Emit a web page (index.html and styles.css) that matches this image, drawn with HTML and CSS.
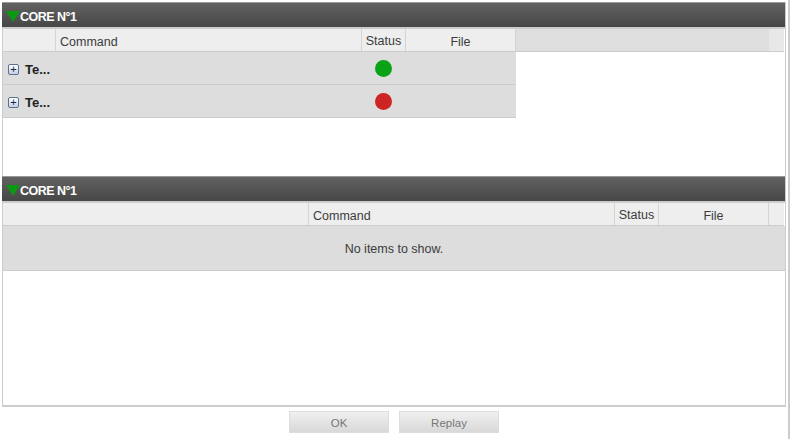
FILE: index.html
```html
<!DOCTYPE html>
<html lang="en">
<head>
    <meta charset="UTF-8">
    <title>Core commands</title>
    <link rel="stylesheet" href="styles.css">
</head>
<body>
    <div class="window">
        <div class="panels">
            <!-- First core -->
            <section class="panel panel-top">
                <div class="panel-title">
                    <svg class="arrow" width="14" height="11" viewBox="0 0 14 11"><polygon points="0,0 14,0 7,11" fill="#0a9a12"/></svg>
                    <span>CORE N°1</span>
                </div>
                <div class="grid-head">
                    <div class="cell col-expand"></div>
                    <div class="cell col-command">Command</div>
                    <div class="cell col-status">Status</div>
                    <div class="cell col-file">File</div>
                    <div class="head-fill"></div>
                    <div class="head-end"></div>
                </div>
                <div class="grid-row">
                    <div class="row-name">
                        <span class="expander">+</span>
                        <b>Te...</b>
                    </div>
                    <div class="row-status"><span class="dot dot-green"></span></div>
                </div>
                <div class="grid-row">
                    <div class="row-name">
                        <span class="expander">+</span>
                        <b>Te...</b>
                    </div>
                    <div class="row-status"><span class="dot dot-red"></span></div>
                </div>
            </section>

            <!-- Second core -->
            <section class="panel panel-bottom">
                <div class="panel-title">
                    <svg class="arrow" width="14" height="11" viewBox="0 0 14 11"><polygon points="0,0 14,0 7,11" fill="#0a9a12"/></svg>
                    <span>CORE N°1</span>
                </div>
                <div class="grid-head grid-head-full">
                    <div class="cell col-blank"></div>
                    <div class="cell col-command">Command</div>
                    <div class="cell col-status">Status</div>
                    <div class="cell col-file">File</div>
                    <div class="head-end-light"></div>
                </div>
                <div class="no-items">No items to show.</div>
            </section>
        </div>

        <div class="buttons">
            <button class="btn">OK</button>
            <button class="btn">Replay</button>
        </div>
    </div>
</body>
</html>
```

FILE: styles.css
```css
html, body {
    margin: 0;
    height: 100%;
    background-color: #fff;
    overflow: hidden;
}

/* Outer frame, grey bar on the right */
.window {
    box-sizing: border-box;
    width: 790px;
    height: 439px;
    padding: 2px 2px 0 2px;
    border-right: 2px solid #ccc;
    font-family: "Liberation Sans", Arial, sans-serif;
    font-size: 12.5px;
    color: #3c3c3c;
}

.panels {
    box-sizing: border-box;
    width: 784px;
    height: 405px;
    padding-right: 1px;
    border-left: 1px solid #ccc;
    border-right: 1px solid #ccc;
    border-bottom: 2px solid #ccc;
}

.panel-top {
    height: 174px;
}

.panel-bottom {
    height: 229px;
}

/* Dark title bar */
.panel-title {
    display: flex;
    align-items: center;
    height: 24px;
    margin: 0 -1px 0 -1px;
    border-top: 1px solid #999;
    border-bottom: 2px solid #ccc;
    background: linear-gradient(#626262, #464646);
    color: #fff;
    font-size: 12.5px;
    font-weight: bold;
    letter-spacing: -0.5px;
}

.panel-title span {
    padding-top: 4px;
}

.arrow {
    margin: 3px 0 0 4px;
}

/* Column headers */
.grid-head {
    display: flex;
    height: 22px;
    border-bottom: 1px solid #ccc;
    background-color: #dedede;
}

.cell {
    box-sizing: border-box;
    height: 22px;
    line-height: 26px;
    background-color: #eee;
    border-right: 1px solid #d4d4d4;
}

.col-expand {
    width: 53px;
}

.col-blank {
    width: 306px;
}

.col-command {
    width: 306px;
    padding-left: 4px;
}

.col-status {
    width: 44px;
    text-align: center;
    line-height: 24px;
}

.col-file {
    width: 110px;
    text-align: center;
}

.head-fill {
    flex: 1;
}

.head-end {
    width: 15px;
    background-color: #e8e8e8;
}

.head-end-light {
    flex: 1;
    background-color: #eee;
}

/* Rows */
.grid-row {
    display: flex;
    width: 513px;
    height: 32px;
    border-bottom: 1px solid #ccc;
    background-color: #ddd;
}

.row-name {
    display: flex;
    align-items: center;
    box-sizing: border-box;
    width: 359px;
    padding: 3px 0 0 5px;
    color: #222;
}

.row-name b {
    margin-left: 6px;
    font-size: 13px;
}

.expander {
    box-sizing: border-box;
    width: 11px;
    height: 11px;
    border: 1px solid #5d6f8f;
    border-radius: 2px;
    background: linear-gradient(#fff, #c4cfe4);
    color: #14264a;
    font-size: 11px;
    line-height: 8px;
    text-align: center;
}

.row-status {
    display: flex;
    align-items: center;
    justify-content: center;
    width: 43px;
}

.dot {
    width: 17px;
    height: 17px;
    border-radius: 50%;
}

.dot-green {
    background-color: #0aa316;
}

.dot-red {
    background-color: #cd2424;
}

.no-items {
    height: 44px;
    margin-right: -1px;
    line-height: 46px;
    text-align: center;
    background-color: #ddd;
    border-bottom: 1px solid #ccc;
}

/* Bottom buttons */
.buttons {
    display: flex;
    justify-content: center;
    gap: 10px;
    padding: 4px 0 0 0;
}

.btn {
    width: 100px;
    height: 22px;
    padding: 1px 0 0;
    border: 1px solid #ddd;
    background: linear-gradient(#f0f0f0, #d8d8d8);
    color: #777;
    font-family: inherit;
    font-size: 11.5px;
}
```
